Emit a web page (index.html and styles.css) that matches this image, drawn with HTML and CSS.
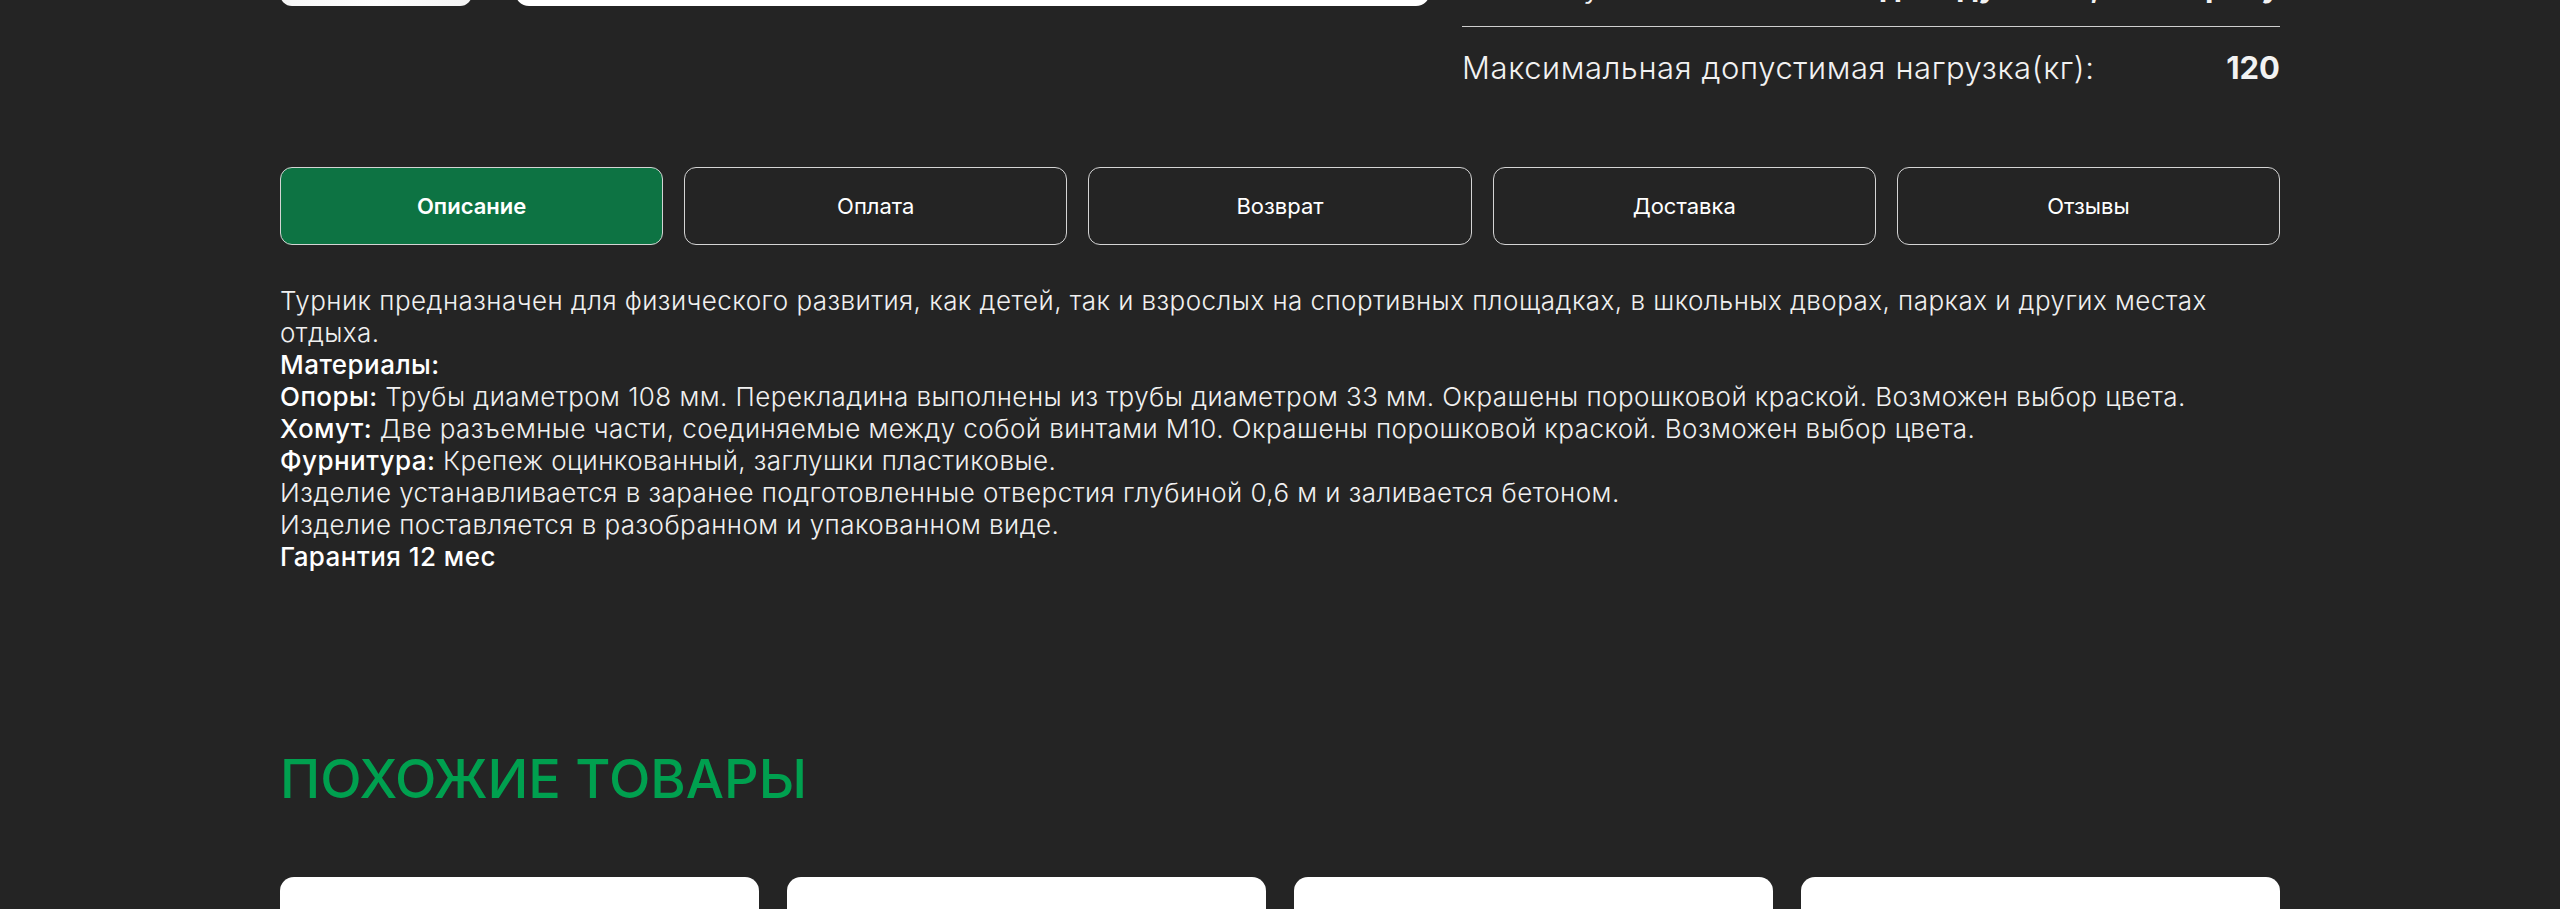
FILE: index.html
```html
<!DOCTYPE html>
<html lang="ru">
<head>
<meta charset="utf-8">
<title>Турник</title>
<link rel="stylesheet" href="styles.css">
</head>
<body>
<div class="page">
  <section class="product">
    <div class="gallery">
      <div class="thumbs">
        <div class="thumb"></div>
        <div class="thumb thumb-last"></div>
      </div>
      <div class="main-image"></div>
    </div>
    <div class="specs">
      <div class="spec-row"><span class="spec-label">Высота(мм):</span><span class="spec-value">2500</span></div>
      <div class="spec-row"><span class="spec-label">Ширина(мм):</span><span class="spec-value">1500</span></div>
      <div class="spec-row"><span class="spec-label">Материал:</span><span class="spec-value">Сталь</span></div>
      <div class="spec-row"><span class="spec-label">Высота установки:</span><span class="spec-value">Индивидуально, по запросу</span></div>
      <div class="spec-row"><span class="spec-label">Максимальная допустимая нагрузка(кг):</span><span class="spec-value">120</span></div>
    </div>
  </section>

  <nav class="tabs">
    <div class="tab tab-active">Описание</div>
    <div class="tab">Оплата</div>
    <div class="tab">Возврат</div>
    <div class="tab">Доставка</div>
    <div class="tab">Отзывы</div>
  </nav>

  <div class="description">
    <p>Турник предназначен для физического развития, как детей, так и взрослых на спортивных площадках, в школьных дворах, парках и других местах отдыха.</p>
    <p><strong>Материалы:</strong></p>
    <p><strong>Опоры:</strong> Трубы диаметром 108 мм. Перекладина выполнены из трубы диаметром 33 мм. Окрашены порошковой краской. Возможен выбор цвета.</p>
    <p><strong>Хомут:</strong> Две разъемные части, соединяемые между собой винтами М10. Окрашены порошковой краской. Возможен выбор цвета.</p>
    <p><strong>Фурнитура:</strong> Крепеж оцинкованный, заглушки пластиковые.</p>
    <p>Изделие устанавливается в заранее подготовленные отверстия глубиной 0,6 м и заливается бетоном.</p>
    <p>Изделие поставляется в разобранном и упакованном виде.</p>
    <p><strong>Гарантия 12 мес</strong></p>
  </div>

  <section class="similar">
    <h2 class="similar-title">ПОХОЖИЕ ТОВАРЫ</h2>
    <div class="cards">
      <div class="card"></div>
      <div class="card"></div>
      <div class="card"></div>
      <div class="card"></div>
    </div>
  </section>
</div>
</body>
</html>
```
FILE: styles.css
```css
html, body {
  margin: 0;
  padding: 0;
  background: #242424;
  color: #f2f2f2;
  font-family: "Inter", "Noto Sans", sans-serif;
  overflow: hidden;
}

.page {
  width: 2000px;
  margin: -301px auto 0;
}

.product {
  display: flex;
  gap: 32px;
  align-items: flex-start;
}

.gallery {
  display: flex;
  gap: 43px;
  width: 1150px;
  height: 307px;
  flex: none;
}

.thumbs {
  width: 192px;
  display: flex;
  flex-direction: column;
  justify-content: flex-end;
  gap: 27px;
}

.thumb {
  height: 140px;
  background: #ffffff;
  border-radius: 12px;
}

.thumb-last {
  background: linear-gradient(90deg, #f6f6f6 0%, #fdfdfd 50%, #f4f4f4 100%);
}

.main-image {
  flex: 1;
  background: #ffffff;
  border-radius: 14px;
}

.specs {
  flex: 1;
  display: flex;
  flex-direction: column;
}

.spec-row {
  display: flex;
  justify-content: space-between;
  align-items: baseline;
  padding: 23px 0 22px;
  border-bottom: 1px solid #cfcfcf;
  font-size: 31px;
  line-height: 36px;
  letter-spacing: 0.6px;
}

.spec-row:last-child {
  border-bottom: none;
}

.spec-label {
  font-weight: 300;
}

.spec-value {
  font-weight: 700;
  letter-spacing: 0;
}

.tabs {
  display: grid;
  grid-template-columns: repeat(5, 1fr);
  gap: 21px;
  margin-top: 59px;
}

.tab {
  height: 78px;
  box-sizing: border-box;
  border: 1px solid #d4d4d4;
  border-radius: 12px;
  display: flex;
  align-items: center;
  justify-content: center;
  font-size: 22px;
  font-weight: 400;
  color: #ffffff;
}

.tab-active {
  background: #0d7343;
  font-weight: 600;
}

.description {
  max-width: 1960px;
  margin-top: 40px;
  font-size: 26px;
  line-height: 32px;
  font-weight: 300;
  letter-spacing: 0.45px;
  color: #f0f0f0;
}

.description p {
  margin: 0;
}

.description strong {
  font-weight: 500;
  color: #ffffff;
}

.similar {
  margin-top: 173px;
}

.similar-title {
  margin: 0;
  font-size: 54px;
  line-height: 65px;
  font-weight: 500;
  color: #00a04f;
}

.cards {
  display: grid;
  grid-template-columns: repeat(4, 1fr);
  gap: 28px;
  margin-top: 66px;
}

.card {
  height: 500px;
  background: #ffffff;
  border-radius: 14px;
}
```
